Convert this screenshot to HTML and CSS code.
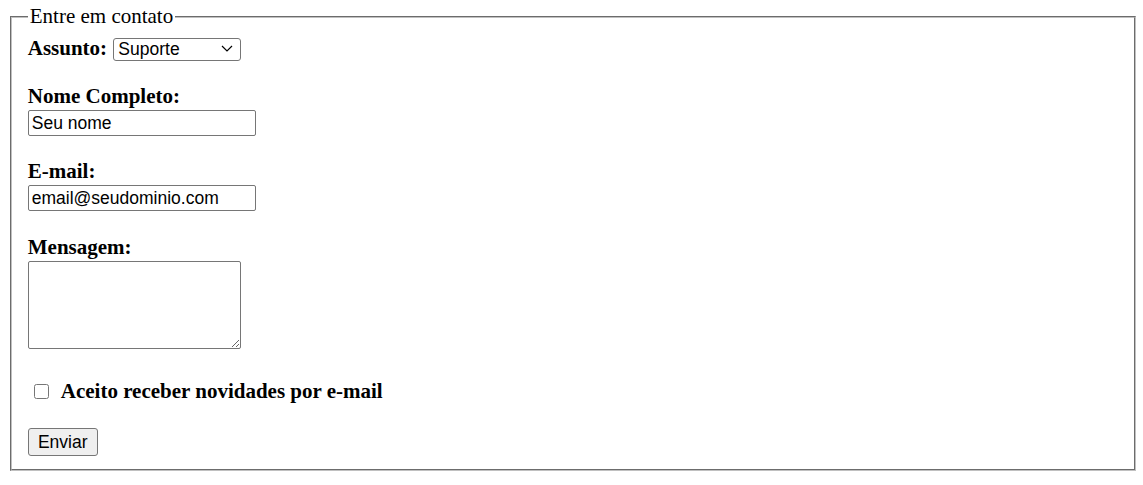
FILE: index.html
```html
<!DOCTYPE html>
<html lang="pt">
<head>
<meta charset="utf-8">
<title>Contato</title>
<link rel="stylesheet" href="styles.css">
</head>
<body>
<form class="contact">
  <fieldset class="box">
    <legend class="box-title">Entre em contato</legend>
    <div class="row-subject">
      <label class="lbl" for="assunto">Assunto:</label>
      <span class="sel-wrap">
        <select id="assunto" class="sel">
          <option>Suporte</option>
          <option>Vendas</option>
          <option>Financeiro</option>
        </select>
        <svg class="chev" width="12" height="7" viewBox="0 0 12 7" aria-hidden="true"><path d="M1 1 L6 6 L11 1" fill="none" stroke="#000" stroke-width="1.2"/></svg>
      </span>
    </div>
    <div class="field field-name">
      <label class="lbl block" for="nome">Nome Completo:</label>
      <input id="nome" class="txt" type="text" value="Seu nome">
    </div>
    <div class="field">
      <label class="lbl block" for="email">E-mail:</label>
      <input id="email" class="txt" type="email" value="email@seudominio.com">
    </div>
    <div class="field field-msg">
      <label class="lbl block" for="msg">Mensagem:</label>
      <textarea id="msg" class="area"></textarea>
    </div>
    <div class="check-row">
      <input id="news" class="chk" type="checkbox">
      <label class="lbl" for="news">Aceito receber novidades por e-mail</label>
    </div>
    <button class="btn" type="button">Enviar</button>
  </fieldset>
</form>
</body>
</html>
```

FILE: styles.css
```css
body {
  margin: 4px 7px 8px 8px;
  font-family: "Liberation Serif", "Times New Roman", serif;
  font-size: 21px;
  color: #000;
  background: #fff;
}
.contact { margin: 0; }
.box {
  margin: 0 0 0 2px;
  padding: 0.35em 0.75em 0.625em;
  border: 2px groove #c0c0c0;
}
.box-title { padding: 0 2px; }
.lbl { font-weight: bold; }
.block { display: block; height: 24px; line-height: 21px; }
.field-msg .block { height: 25px; line-height: 23px; }
.row-subject { height: 26px; }
.field { margin-top: 25px; }
.field-name { margin-top: 24px; }
.field-msg { margin-top: 25px; }
.sel, .txt, .area, .btn {
  font-family: "Liberation Sans", Arial, sans-serif;
  font-size: 17.5px;
  color: #000;
}
.sel-wrap { position: relative; display: inline-block; margin-left: 1px; }
.sel {
  appearance: none;
  -webkit-appearance: none;
  width: 128px;
  height: 23px;
  margin: 0;
  padding: 0 20px 0 4px;
  border: 1px solid #767676;
  border-radius: 3px;
  background: #fff;
}
.chev { position: absolute; right: 8px; top: 9px; pointer-events: none; }
.txt {
  display: block;
  width: 228px;
  height: 26px;
  box-sizing: border-box;
  margin: 0;
  padding: 1px 3px;
  border: 1px solid #767676;
  border-radius: 2px;
}
.area {
  display: block;
  width: 213px;
  height: 88px;
  box-sizing: border-box;
  margin: 0;
  border: 1px solid #767676;
  border-radius: 2px;
}
.check-row { display: flex; align-items: center; height: 24px; margin-top: 30px; }
.chk { width: 15px; height: 15px; margin: 0 12px 0 6px; }
.btn {
  display: block;
  width: 70px;
  height: 28px;
  padding: 1px 6px;
  margin-top: 25px;
  border: 1px solid #767676;
  border-radius: 3px;
  background: #efefef;
}
```
